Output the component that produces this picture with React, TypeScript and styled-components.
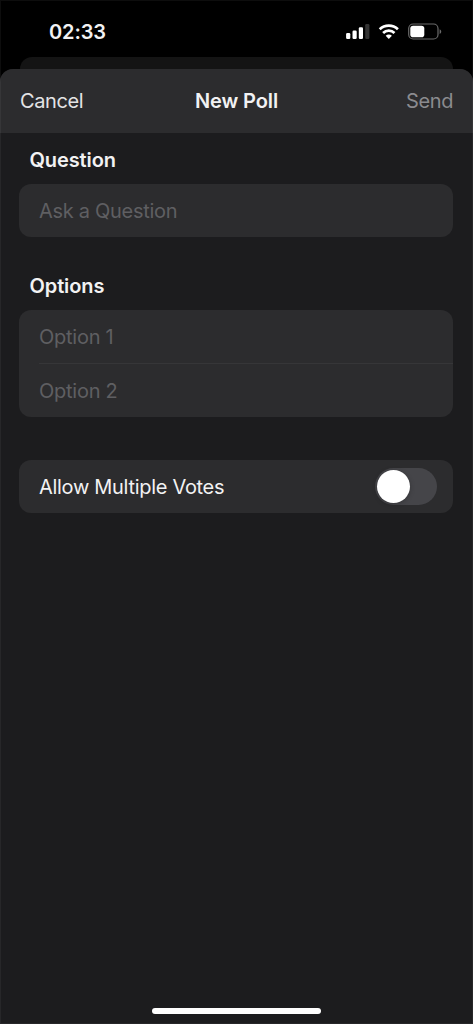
import React, { useState } from 'react';
import styled, { createGlobalStyle } from 'styled-components';

const GlobalStyle = createGlobalStyle`
  * { box-sizing: border-box; }
  body {
    margin: 0;
    background: #000;
    font-family: Inter, "Liberation Sans", sans-serif;
    font-size: 20px;
    color: #f2f2f3;
    -webkit-font-smoothing: antialiased;
  }
  button, input { font: inherit; color: inherit; letter-spacing: inherit; }
`;

const Screen = styled.div`
  position: relative;
  display: flex;
  flex-direction: column;
  height: 1024px;
  overflow: hidden;
  background: #000;
  &::after {
    content: '';
    position: absolute;
    inset: 0;
    border: 1px solid rgba(255, 255, 255, 0.05);
    pointer-events: none;
  }
`;

const StatusBar = styled.header`
  display: flex;
  justify-content: space-between;
  align-items: flex-start;
  height: 57px;
  padding: 20px 31px 0 49px;
`;

const Time = styled.time`
  font-weight: 600;
  line-height: 24px;
  letter-spacing: -0.1px;
`;

const StatusIcons = styled.svg`
  display: block;
  width: 97px;
  height: 24px;
`;

const BackSheet = styled.div`
  flex: none;
  height: 24px;
  margin: 0 20px;
  border-radius: 12px 12px 0 0;
  background: #141414;
`;

const Sheet = styled.main`
  position: relative;
  flex: 1;
  display: flex;
  flex-direction: column;
  margin-top: -12px;
  border-radius: 13px 13px 0 0;
  overflow: hidden;
  background: #1c1c1e;
`;

const NavBar = styled.nav`
  display: grid;
  grid-template-columns: 1fr auto 1fr;
  align-items: center;
  height: 64px;
  padding: 0 20px;
  background: #2c2c2e;
`;

const NavButton = styled.button<{ $end?: boolean }>`
  justify-self: ${(p) => (p.$end ? 'end' : 'start')};
  padding: 0;
  border: 0;
  background: none;
  line-height: 24px;
  letter-spacing: -0.4px;
  color: ${(p) => (p.$end ? '#8b8b8f' : '#e4e4e6')};
`;

const Title = styled.h1`
  margin: 0;
  font-size: 20px;
  font-weight: 600;
  line-height: 24px;
  letter-spacing: -0.1px;
`;

const Form = styled.form`
  display: flex;
  flex-direction: column;
  flex: 1;
  padding: 15px 20px 0 19px;
`;

const SectionTitle = styled.h2`
  margin: 0 0 12px 10.5px;
  font-size: 20px;
  font-weight: 600;
  line-height: 24px;
  letter-spacing: -0.1px;
`;

const Card = styled.section<{ $gap?: number }>`
  margin-bottom: ${(p) => p.$gap ?? 0}px;
  padding-left: 20px;
  border-radius: 12px;
  background: #2c2c2e;
`;

const Row = styled.div<{ $divided?: boolean }>`
  display: flex;
  align-items: center;
  justify-content: space-between;
  height: ${(p) => (p.$divided ? 54 : 53)}px;
  padding-right: 16px;
  border-top: ${(p) => (p.$divided ? '1px solid #363638' : '0')};
`;

const Field = styled.input<{ $ls?: number }>`
  width: 100%;
  height: 30px;
  padding: 0;
  border: 0;
  outline: 0;
  background: none;
  letter-spacing: ${(p) => p.$ls ?? -0.25}px;
  &::placeholder { color: #5f5f62; opacity: 1; }
`;

const RowLabel = styled.span`
  letter-spacing: -0.3px;
`;

const Switch = styled.button<{ $on: boolean }>`
  display: flex;
  align-items: center;
  justify-content: ${(p) => (p.$on ? 'flex-end' : 'flex-start')};
  width: 62px;
  height: 37px;
  padding: 0 2px;
  border: 0;
  border-radius: 19px;
  background: ${(p) => (p.$on ? '#34c759' : '#454549')};
`;

const Knob = styled.span`
  width: 33px;
  height: 33px;
  border-radius: 50%;
  background: #fff;
  box-shadow: 0 1px 5px rgba(0, 0, 0, 0.25);
`;

const HomeIndicator = styled.div`
  align-self: center;
  width: 169px;
  height: 6px;
  margin-bottom: 10px;
  border-radius: 3px;
  background: #fff;
`;

export default function App() {
  const [multiple, setMultiple] = useState(false);
  return (
    <>
      <GlobalStyle />
      <Screen>
        <StatusBar>
          <Time>02:33</Time>
          <StatusIcons viewBox="0 0 97 24" fill="none">
            <g fill="#fff">
              <rect x="1.1" y="13.1" width="4.2" height="5.9" rx="1.2" />
              <rect x="7.5" y="10.5" width="4.2" height="8.5" rx="1.2" />
              <rect x="13.8" y="7.2" width="4.2" height="11.8" rx="1.2" />
              <rect x="20.2" y="4" width="4.2" height="15" rx="1.2" opacity="0.2" />
            </g>
            <g stroke="#fff" strokeWidth="2.7">
              <path d="M34.7 9.3a13 13 0 0 1 18.2 0" />
              <path d="M38.1 13a8.1 8.1 0 0 1 11.4 0" />
            </g>
            <path d="M40.7 15.7a4.4 4.4 0 0 1 6.2 0L43.8 18.9Z" fill="#fff" />
            <rect x="63.7" y="4" width="29.3" height="15" rx="4.5" stroke="#6b6b6b" strokeWidth="1.2" />
            <rect x="65.3" y="5.8" width="14" height="11.4" rx="2.8" fill="#fff" />
            <path d="M94.6 9.2c2.2 .9 2.2 3.9 0 4.8Z" fill="#6b6b6b" />
          </StatusIcons>
        </StatusBar>
        <BackSheet />
        <Sheet>
          <NavBar>
            <NavButton type="button">Cancel</NavButton>
            <Title>New Poll</Title>
            <NavButton type="button" $end>Send</NavButton>
          </NavBar>
          <Form>
            <SectionTitle>Question</SectionTitle>
            <Card $gap={37}>
              <Row><Field placeholder="Ask a Question" $ls={-0.3} /></Row>
            </Card>
            <SectionTitle>Options</SectionTitle>
            <Card $gap={43}>
              <Row><Field placeholder="Option 1" /></Row>
              <Row $divided><Field placeholder="Option 2" /></Row>
            </Card>
            <Card>
              <Row>
                <RowLabel>Allow Multiple Votes</RowLabel>
                <Switch
                  type="button"
                  role="switch"
                  aria-label="Allow Multiple Votes"
                  aria-checked={multiple}
                  $on={multiple}
                  onClick={() => setMultiple(!multiple)}
                >
                  <Knob />
                </Switch>
              </Row>
            </Card>
          </Form>
          <HomeIndicator />
        </Sheet>
      </Screen>
    </>
  );
}
